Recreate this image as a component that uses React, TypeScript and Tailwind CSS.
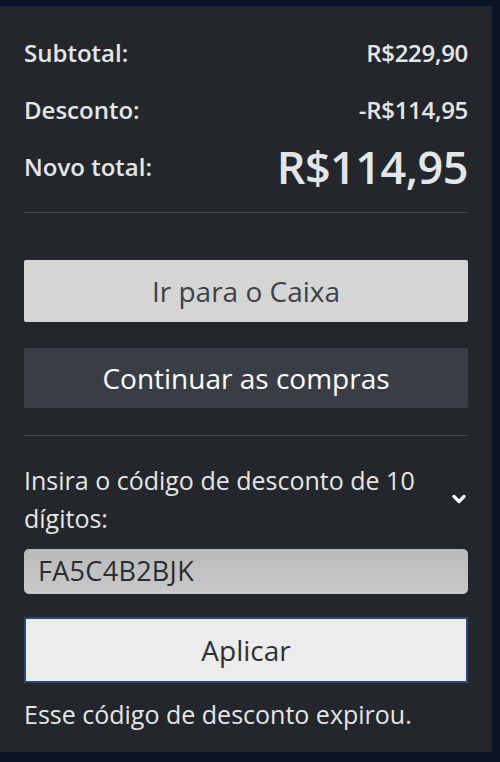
const font = { fontFamily: '"Open Sans", "Noto Sans", sans-serif' };

function Row({ label, value, big }: { label: string; value: string; big?: boolean }) {
    return (
        <div className="flex items-center justify-between">
            <span className="text-[24px] font-semibold text-[#e3e6e9]">{label}</span>
            <span
                className={
                    big
                        ? 'text-[45px] leading-[52px] font-semibold text-[#e3e6e9] tracking-[-0.5px]'
                        : 'text-[24px] font-semibold text-[#e3e6e9] tracking-[-0.3px]'
                }
            >
                {value}
            </span>
        </div>
    );
}

export default function App() {
    return (
        <div className="w-[500px] h-[762px] bg-[#0b1326] pt-[6px] pr-[8px] pb-[10px]" style={font}>
            <div className="h-full bg-[#23272b] px-[24px] pt-[19px]">
                <div className="flex flex-col">
                    <div className="h-[56px] flex flex-col justify-center">
                        <Row label="Subtotal:" value="R$229,90" />
                    </div>
                    <div className="h-[58px] flex flex-col justify-center">
                        <Row label="Desconto:" value="-R$114,95" />
                    </div>
                    <div className="h-[56px] flex flex-col justify-center">
                        <Row label="Novo total:" value="R$114,95" big />
                    </div>
                </div>

                <div className="mt-[17px] h-px bg-[#43484e]" />

                <button className="mt-[47px] w-full h-[62px] bg-[#d5d5d5] rounded-[2px] text-[28px] text-[#3d4148]">
                    Ir para o Caixa
                </button>
                <button className="mt-[26px] w-full h-[60px] bg-[#393d45] rounded-[2px] text-[28px] font-medium text-white">
                    Continuar as compras
                </button>

                <div className="mt-[27px] h-px bg-[#43484e]" />

                <div className="mt-[25px] flex items-center justify-between">
                    <p className="text-[25px] leading-[38px] text-[#e3e6e9] w-[400px]">
                        Insira o código de desconto de 10 dígitos:
                    </p>
                    <svg width="14" height="10" viewBox="0 0 14 10" className="mr-[2px]">
                        <path d="M2 2.5 L7 7.5 L12 2.5" fill="none" stroke="#ffffff" strokeWidth="3.2" strokeLinecap="round" strokeLinejoin="round" />
                    </svg>
                </div>

                <div className="mt-[12px] h-[45px] rounded-[5px] bg-gradient-to-b from-[#bababa] to-[#c9c9c9] flex items-center px-[14px]">
                    <span className="text-[27px] text-[#2a2d31] tracking-[0.3px]">FA5C4B2BJK</span>
                </div>

                <button className="mt-[23px] w-full h-[66px] bg-[#ececec] border-2 border-[#2c4777] text-[28px] text-[#2d3035]">
                    Aplicar
                </button>

                <p className="mt-[15px] text-[25px] leading-[32px] text-[#e3e6e9]">Esse código de desconto expirou.</p>
            </div>
        </div>
    );
}
